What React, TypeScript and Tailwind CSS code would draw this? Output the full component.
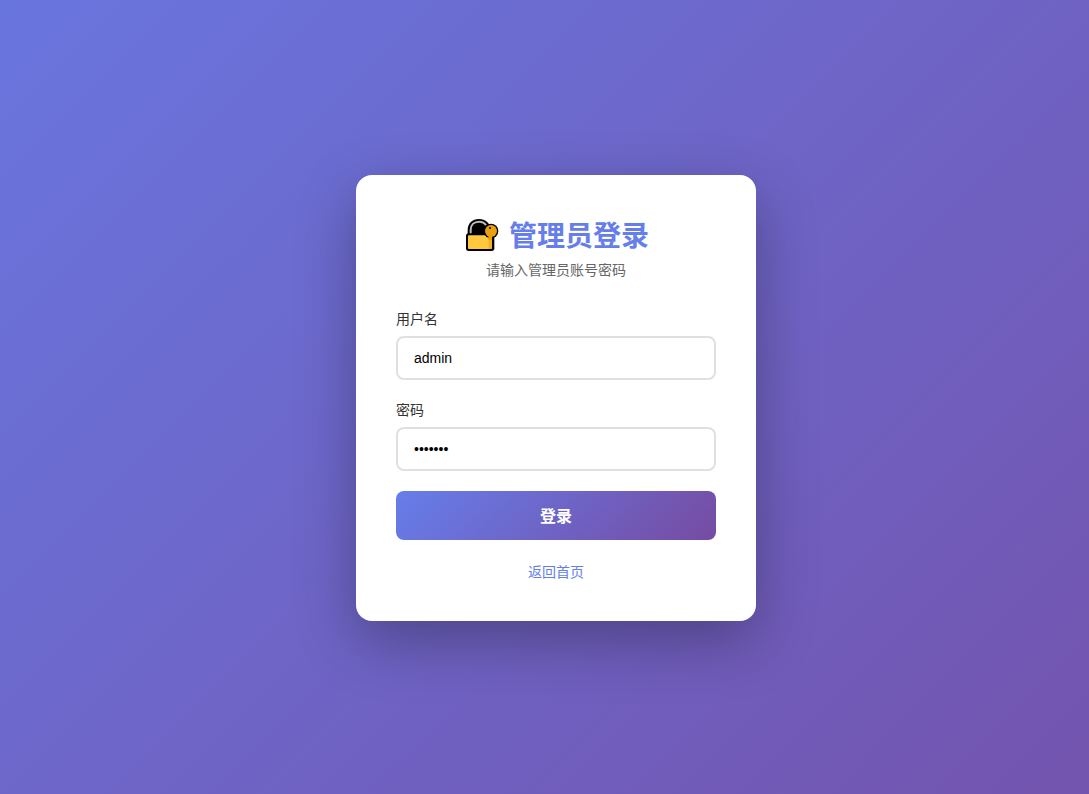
import React, { useState } from 'react';

interface FieldProps {
  id: string;
  label: string;
  type: string;
  value: string;
  onChange: (value: string) => void;
}

export default function App() {
  const [username, setUsername] = useState('admin');
  const [password, setPassword] = useState('1234567');

  return (
    <main className="min-h-screen flex items-center justify-center pt-[2px] pl-[23px] bg-[linear-gradient(135deg,#667eea_-26%,#764ba2_127%)] font-['Liberation_Sans','Noto_Sans_CJK_SC',sans-serif] text-sm">
      <div className="w-full max-w-[400px] rounded-2xl bg-white p-10 shadow-[0_20px_60px_rgba(0,0,0,0.3)]">
        {/* Header */}
        <header className="mb-7 text-center">
          <h1 className="flex items-center justify-center gap-2 text-[28px] leading-[44px] font-bold text-[#667eea]">
            <LockIcon />
            管理员登录
          </h1>
          <p className="mt-px leading-[21px] text-[#666]">请输入管理员账号密码</p>
        </header>

        {/* Form */}
        <form onSubmit={(e) => e.preventDefault()}>
          <Field id="username" label="用户名" type="text" value={username} onChange={setUsername} />
          <Field id="password" label="密码" type="password" value={password} onChange={setPassword} />
          <button
            type="submit"
            className="h-[49px] w-full rounded-lg bg-[linear-gradient(135deg,#667eea_0%,#764ba2_100%)] pt-0.5 text-base font-bold text-white cursor-pointer"
          >
            登录
          </button>
        </form>

        <div className="mt-6 text-center leading-[17px]">
          <a href="/" className="text-[#667eea]">返回首页</a>
        </div>
      </div>
    </main>
  );
}

function Field({ id, label, type, value, onChange }: FieldProps) {
  return (
    <div className="mb-5">
      <label htmlFor={id} className="mb-1.5 block leading-[21px] text-[#333]">
        {label}
      </label>
      <input
        id={id}
        type={type}
        value={value}
        onChange={(e) => onChange(e.target.value)}
        className="block h-11 w-full rounded-lg border-2 border-[#e0e0e0] px-4 text-sm text-black outline-none focus:border-[#667eea]"
      />
    </div>
  );
}

function LockIcon() {
  return (
    <svg width="38" height="38" viewBox="21 24 114 114" fill="none" aria-hidden="true">
      {/* Shackle */}
      <path d="M35 80V60C35 40 49 27 69 27S103 40 103 60V80Z" fill="#000" />
      <path d="M44 74V60C44 45 54 35 69 35C78 35 86 39 90 46" stroke="#b8bcc2" strokeWidth="6" />
      {/* Body */}
      <rect x="30" y="70" width="85" height="53" rx="8" fill="#000" />
      <rect x="36" y="76" width="72" height="41" rx="3" fill="#ffc83d" />
      <path d="M98 76H108V113L104 117H98Z" fill="#f3ae2b" />
      {/* Key */}
      <circle cx="105" cy="63" r="22" fill="#000" />
      <path d="M97 74H108V90H97Z" fill="#e8a00c" />
      <circle cx="105" cy="63" r="18" fill="#e8a00c" />
      <circle cx="102" cy="54" r="3" fill="#000" />
    </svg>
  );
}
